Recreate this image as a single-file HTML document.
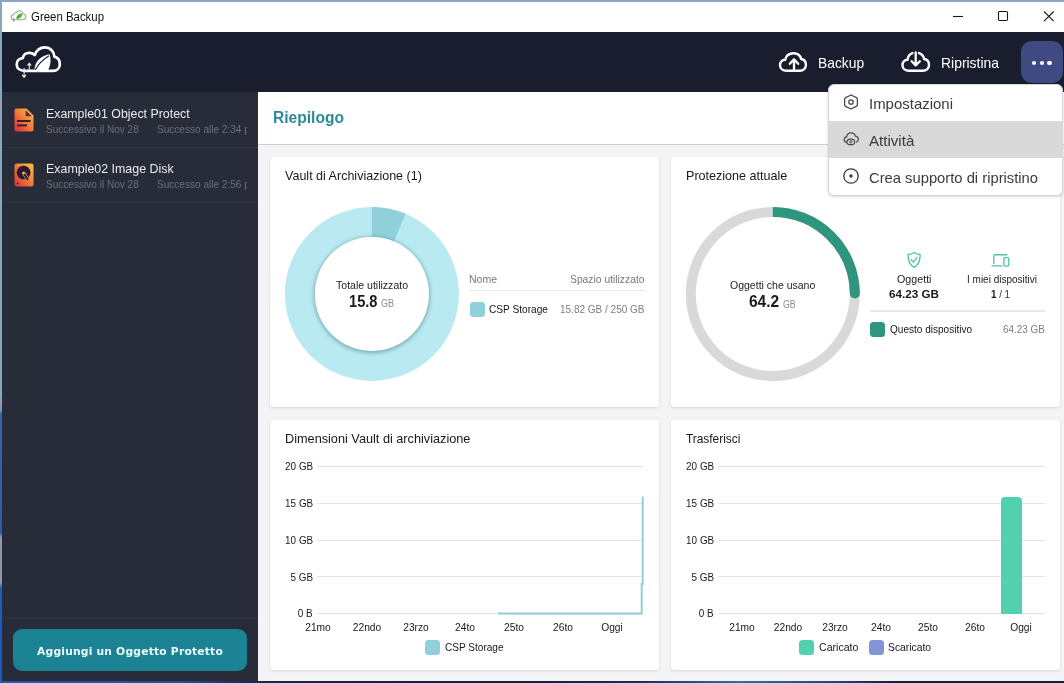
<!DOCTYPE html>
<html lang="it">
<head>
<meta charset="utf-8">
<title>Green Backup</title>
<style>
*{box-sizing:border-box;margin:0;padding:0}
html,body{width:1064px;height:683px;overflow:hidden}
body{position:relative;background:#16356b;font-family:"Liberation Sans",sans-serif;color:#222;-webkit-font-smoothing:antialiased}
.abs{position:absolute}
.t{position:absolute;white-space:nowrap;line-height:1;transform-origin:0 0}
#deskTop{left:0;top:0;width:1064px;height:2px;background:#8aa5bf}
#deskLeft{left:0;top:0;width:2px;height:683px;background:linear-gradient(#8aa5bf 0,#8aa5bf 395px,#7f97b5 410px,#3166ad 414px,#2a5ea5 533px,#8a97ad 537px,#8a97ad 583px,#1f5cc0 588px,#1c58bd 683px)}
#deskBottom{left:0;top:681px;width:1064px;height:2px;background:linear-gradient(90deg,#1c58bd 0,#1c4f9f 180px,#12284f 260px,#101f3d 520px,#12305f 640px,#2a6fb5 740px,#1b4a86 830px,#0f1d3a 900px,#0f1d3a 1064px)}
#titlebar{left:2px;top:2px;width:1062px;height:30px;background:#fff}
#header{left:2px;top:32px;width:1062px;height:60px;background:#1a1d2e}
#sidebar{left:2px;top:92px;width:256px;height:589px;background:#282b38}
#main{left:258px;top:92px;width:806px;height:589px;background:#f4f4f6}
#mainhead{left:258px;top:92px;width:806px;height:53px;background:#fff;border-bottom:1px solid #cfcfd3}
.card{position:absolute;background:#fff;border-radius:3px;box-shadow:0 1px 3px rgba(0,0,0,.13)}
.sideitem{position:absolute;left:2px;width:256px;height:55px;border-bottom:1px solid #2f3341}
.side-title{color:#e9eaee;font-size:13px}
.side-sub{color:#6c6f7c;font-size:11px}
.ct{font-size:13px;color:#18181c}
.ax{font-size:11px;color:#18181c}
.yl3,.yl4{transform-origin:100% 0;transform:scaleX(.9)}
.xl3,.xl4{transform-origin:50% 0;transform:scaleX(.93)}
.gray{color:#8a8a90}
.menu{left:828px;top:84px;width:235px;height:111.5px;background:#fff;border-radius:6px;border:1px solid #d6d6da;box-shadow:0 1px 3px rgba(0,0,0,.16);overflow:hidden}
.mi{font-size:15px;color:#3a3a40}
/*FITX*/
#ttl{transform:scaleX(0.952)}
#hb1{transform:scaleX(0.921)}
#hb2{transform:scaleX(0.928)}
#s1{transform:scaleX(0.951)}
#s1a{transform:scaleX(0.914)}
#s2{transform:scaleX(0.955)}
#riep{transform:scaleX(0.974)}
#c1t{transform:scaleX(0.963)}
#c1a{transform:scaleX(0.916)}
#c1b{transform:scaleX(0.915)}
#c1c{transform:scaleX(0.899)}
#c1n{transform:scaleX(0.999)}
#c1s{transform:scaleX(0.982)}
#c1l{transform:scaleX(0.922)}
#c1v{transform:scaleX(0.952)}
#c2t{transform:scaleX(0.967)}
#c2a{transform:scaleX(0.914)}
#c2b{transform:scaleX(0.967)}
#c2c{transform:scaleX(0.879)}
#c2o{transform:scaleX(1.019)}
#c2ov{transform:scaleX(1.062)}
#c2d{transform:scaleX(0.952)}
#c2dv{transform:scaleX(0.887)}
#c2q{transform:scaleX(0.956)}
#c2qv{transform:scaleX(0.944)}
#c3t{transform:scaleX(0.977)}
#c3l{transform:scaleX(0.915)}
#c4t{transform:scaleX(0.913)}
#c4l1{transform:scaleX(0.962)}
#c4l2{transform:scaleX(0.938)}
#m1{transform:scaleX(0.997)}
#m2{transform:scaleX(1.006)}
#m3{transform:scaleX(0.984)}
#addbtn{transform:scaleX(0.976)}
/*ENDFITX*/
</style>
</head>
<body>
<div class="abs" id="titlebar"></div>
<div class="abs" id="header"></div>
<div class="abs" id="sidebar"></div>
<div class="abs" id="main"></div>
<div class="abs" id="mainhead"></div>

<!-- TITLEBAR -->
<div id="sec-title">
<svg class="abs" style="left:9.5px;top:9.6px" width="17.5" height="12" viewBox="0 0 19 13">
  <path d="M4.6 10.6 C2.4 10.6 1.2 9.4 1.2 7.8 C1.2 6.3 2.3 5.3 3.7 5.2 C3.9 3.6 5.2 2.6 6.7 2.8 C7.4 1.5 8.7 0.8 10.2 0.8 C12.3 0.8 13.9 2.3 14.1 4.3 C15.9 4.4 17.2 5.7 17.2 7.4 C17.2 9.2 15.8 10.6 14 10.6 Z" fill="#fff" stroke="#8db27a" stroke-width="1.15"/>
  <path d="M6.8 9.8 C6.6 6.6 9.2 4 13.2 3.6 C13.6 6.8 11.6 9.6 6.8 9.8 Z" fill="#4cae2f"/>
  <path d="M4 8 L4 12.3 M3 11.2 L4 12.4 L5 11.2" fill="none" stroke="#8a8f8a" stroke-width=".8"/>
</svg>
<div class="t" id="ttl" style="left:31px;top:11px;font-size:12px;color:#111">Green Backup</div>
<svg class="abs" style="left:950px;top:8px" width="110" height="18" viewBox="0 0 110 18">
  <path d="M3 8.5 H13" stroke="#1a1a1a" stroke-width="1.1" fill="none"/>
  <rect x="48.5" y="3.5" width="9" height="9" rx="1.2" fill="none" stroke="#1a1a1a" stroke-width="1.1"/>
  <path d="M94 3.5 L103.7 13.2 M103.7 3.5 L94 13.2" stroke="#1a1a1a" stroke-width="1.1" fill="none"/>
</svg>
</div>
<!-- HEADER -->
<div id="sec-header">
<svg class="abs" id="logo" style="left:14px;top:44px" width="50" height="36" viewBox="0 0 50 36">
  <path d="M11 26.8 C5.6 26.8 2.7 24 2.7 20.4 C2.7 16.8 5.2 14.4 8.8 14.2 C9.2 10.8 12.2 8.6 15.6 8.8 C17.6 8.9 19.4 9.6 20.8 11 C22.4 6.2 26.4 3.3 31 3.3 C36.2 3.3 40 7.2 40.4 12.6 C43.8 13.4 45.8 16.6 45.8 20.2 C45.8 24 43 26.8 39 26.8 Z" fill="none" stroke="#fff" stroke-width="2.7" stroke-linejoin="round"/>
  <path d="M20.6 26 C20.2 18 26.6 11.6 35.6 10.2 C37.2 15 36.8 21.4 34 26 Z" fill="#fff"/>
  <path d="M21.4 25.8 C24.4 20 29.2 15.4 35 11.8" stroke="#1a1d2e" stroke-width="1.15" fill="none"/>
  <path d="M15.3 27 V19.6 M13.5 21.6 L15.3 19.2 L17.1 21.6" stroke="#e9eaf0" stroke-width="1.1" fill="none"/>
  <path d="M10.1 24 V33 M8.2 30.9 L10.1 33.4 L12 30.9" stroke="#e9eaf0" stroke-width="1.1" fill="none"/>
</svg>
<svg class="abs" style="left:777px;top:50px" width="32" height="24" viewBox="0 0 32 24">
  <path d="M22.8 20.75 C26.4 20.75 28.9 18.2 28.9 14.8 C28.9 11.8 27 9.4 24.2 9 C23.4 5.6 20.4 3.2 16.4 3.2 C12.2 3.2 8.6 5.8 8.2 9.8 C5.2 10 3 12.2 3 15.2 C3 18.4 5.8 20.75 9.5 20.75 H22.8" fill="none" stroke="#fff" stroke-width="2.4" stroke-linecap="round" stroke-linejoin="round"/>
  <path d="M17 20.4 V10 M12.8 13.8 L17 9.4 L21.2 13.8" fill="none" stroke="#fff" stroke-width="2.3" stroke-linecap="round" stroke-linejoin="round"/>
</svg>
<div class="t" id="hb1" style="left:818px;top:55px;font-size:15px;color:#fff">Backup</div>
<svg class="abs" style="left:900px;top:50px" width="32" height="24" viewBox="0 0 32 24">
  <path d="M12.4 3.1 C9.8 4 7.9 6.4 7.6 9.8 C4.6 10 2.5 12.2 2.5 15.2 C2.5 18.4 5.2 20.75 9 20.75 H22.8 C26.4 20.75 29 18.2 29 14.8 C29 11.8 27 9.4 24.2 9 C23.6 6.2 21.6 4 19 3.1" fill="none" stroke="#fff" stroke-width="2.4" stroke-linecap="round" stroke-linejoin="round"/>
  <path d="M15.7 2.4 V14.8 M11.6 11.2 L15.7 15.4 L19.8 11.2" fill="none" stroke="#fff" stroke-width="2.3" stroke-linecap="round" stroke-linejoin="round"/>
</svg>
<div class="t" id="hb2" style="left:941px;top:55px;font-size:15px;color:#fff">Ripristina</div>
<div class="abs" style="left:1021px;top:41px;width:41.8px;height:41.6px;border-radius:11px;background:#3f4a82"></div>
<div class="abs" style="left:1031.9px;top:60.9px;width:4.4px;height:4.4px;border-radius:2.2px;background:#fff"></div>
<div class="abs" style="left:1039.6px;top:60.9px;width:4.4px;height:4.4px;border-radius:2.2px;background:#fff"></div>
<div class="abs" style="left:1047.2px;top:60.9px;width:4.4px;height:4.4px;border-radius:2.2px;background:#fff"></div>
</div>
<!-- SIDEBAR -->
<div id="sec-side">
<svg width="0" height="0" style="position:absolute"><defs>
  <linearGradient id="og" x1="1" y1="0" x2="0" y2="1"><stop offset="0" stop-color="#f9c648"/><stop offset=".5" stop-color="#f07a3a"/><stop offset="1" stop-color="#da2c3a"/></linearGradient>
</defs></svg>
<div class="sideitem" style="top:92px;height:56px"></div>
<div class="sideitem" style="top:148px"></div>
<svg class="abs" style="left:14px;top:108px" width="20" height="24" viewBox="0 0 20 24">
  <path d="M2.5 0.5 H12.5 L19.5 7.5 V21.5 Q19.5 23.5 17.5 23.5 H2.5 Q0.5 23.5 0.5 21.5 V2.5 Q0.5 0.5 2.5 0.5 Z" fill="url(#og)"/>
  <path d="M11.6 2.2 L17.8 8.2 H12.6 Q11.6 8.2 11.6 7.2 Z" fill="#3a2030" opacity=".85"/>
  <rect x="3" y="12" width="13.6" height="2" fill="#3a2030"/>
  <rect x="3" y="16.4" width="10" height="2" fill="#3a2030"/>
</svg>
<div class="t side-title" id="s1" style="left:46px;top:107px">Example01 Object Protect</div>
<div class="t side-sub" id="s1a" style="left:46px;top:124px">Successivo il Nov 28</div>
<div class="abs" style="left:157px;top:120px;width:90px;height:18px;overflow:hidden"><div class="t side-sub" id="s1b" style="left:0;top:4px;transform:scaleX(.914)">Successo alle 2:34 pm</div></div>
<svg class="abs" style="left:14px;top:163px" width="20" height="24" viewBox="0 0 20 24">
  <rect x="0.5" y="0.5" width="19" height="23" rx="2.2" fill="url(#og)"/>
  <circle cx="9.6" cy="9.6" r="6.9" fill="#2a1a2c"/>
  <path d="M9.8 10.2 L13.6 16.4" stroke="#f5b24a" stroke-width="3.4" stroke-linecap="round"/>
  <path d="M9.8 10.2 L13.6 16.4" stroke="#2a1a2c" stroke-width="2.1" stroke-linecap="round"/>
  <circle cx="9.7" cy="10.2" r="1.1" fill="#f8c27a"/>
  <circle cx="3.8" cy="20.2" r="1" fill="#5a1a2a"/>
</svg>
<div class="t side-title" id="s2" style="left:46px;top:162px">Example02 Image Disk</div>
<div class="t side-sub" id="s2a" style="left:46px;top:179px;transform:scaleX(.914)">Successivo il Nov 28</div>
<div class="abs" style="left:157px;top:175px;width:90px;height:18px;overflow:hidden"><div class="t side-sub" id="s2b" style="left:0;top:4px;transform:scaleX(.914)">Successo alle 2:56 pm</div></div>
<div class="abs" style="left:2px;top:618px;width:256px;height:1px;background:#30343f"></div>
<div class="abs" style="left:13px;top:629px;width:234px;height:42px;border-radius:9px;background:#1c8394"></div>
<div class="t" id="addbtn" style="left:36.8px;top:646.3px;font-family:'DejaVu Sans',sans-serif;font-weight:bold;font-size:11px;letter-spacing:.2px;color:#eef9fb">Aggiungi un Oggetto Protetto</div>
</div>
<!-- CARDS -->
<div id="sec-cards">
<div class="t" id="riep" style="left:273px;top:110.4px;font-size:16px;font-weight:bold;color:#2b8a9a">Riepilogo</div>
<div class="card" style="left:270px;top:157px;width:389px;height:250px"></div>
<div class="t ct" id="c1t" style="left:285px;top:169px">Vault di Archiviazione (1)</div>
<svg class="abs" style="left:272px;top:194px" width="200" height="200" viewBox="272 194 200 200">
  <defs><filter id="ish" x="-20%" y="-20%" width="140%" height="140%"><feGaussianBlur stdDeviation="2.2"/></filter></defs>
  <circle cx="371.9" cy="293.9" r="72" fill="none" stroke="#b9eaf2" stroke-width="30"/>
  <path d="M371.90 221.90 A72 72 0 0 1 399.80 227.53" fill="none" stroke="#8fd0db" stroke-width="30"/>
  <circle cx="371.9" cy="294.9" r="58" fill="#4f8690" opacity=".62" filter="url(#ish)"/>
  <circle cx="371.9" cy="293.9" r="57" fill="#fff"/>
</svg>
<div class="t" id="c1a" style="left:336px;top:279.6px;font-size:11.5px;color:#222">Totale utilizzato</div>
<div class="t" id="c1b" style="left:348.8px;top:294px;font-size:16px;font-weight:bold;color:#1a1a1a">15.8</div>
<div class="t gray" id="c1c" style="left:381px;top:299.2px;font-size:10px">GB</div>
<div class="t gray" id="c1n" style="left:469px;top:274px;font-size:10.5px;color:#77777d">Nome</div>
<div class="t gray" id="c1s" style="left:570px;top:274px;font-size:10.5px;color:#77777d">Spazio utilizzato</div>
<div class="abs" style="left:469px;top:289.6px;width:175.6px;height:1.8px;background:#e8e8eb"></div>
<div class="abs" style="left:469.5px;top:302px;width:15px;height:15px;border-radius:3.5px;background:#8fd0db"></div>
<div class="t" id="c1l" style="left:489px;top:304px;font-size:11px;color:#161618">CSP Storage</div>
<div class="t gray" id="c1v" style="left:560px;top:304px;font-size:10.5px;color:#7d7d83">15.82 GB / 250 GB</div>
<div class="card" style="left:671px;top:157px;width:389px;height:250px"></div>
<div class="t ct" id="c2t" style="left:686px;top:169px">Protezione attuale</div>
<svg class="abs" style="left:673px;top:194px" width="200" height="200" viewBox="673 194 200 200">
  <circle cx="772.8" cy="294" r="82" fill="none" stroke="#d9d9d9" stroke-width="10"/>
  <path d="M772.80 212.00 A82 82 0 0 1 854.80 293.43" fill="none" stroke="#2e957f" stroke-width="10"/>
  <circle cx="854.80" cy="293.43" r="5" fill="#2e957f"/>
</svg>
<div class="t" id="c2a" style="left:730px;top:279.6px;font-size:11.5px;color:#222">Oggetti che usano</div>
<div class="t" id="c2b" style="left:749.3px;top:294.4px;font-size:16px;font-weight:bold;color:#1a1a1a">64.2</div>
<div class="t gray" id="c2c" style="left:783.3px;top:299.5px;font-size:10px">GB</div>
<svg class="abs" style="left:905.9px;top:251px" width="16.2" height="18" viewBox="0 0 18 20">
  <path d="M9 1.6 C11 3 13.4 3.8 15.6 3.9 C15.9 10 14 15.4 9 18.2 C4 15.4 2.1 10 2.4 3.9 C4.6 3.8 7 3 9 1.6 Z" fill="none" stroke="#4fc4a8" stroke-width="1.5" stroke-linejoin="round"/>
  <path d="M5.8 9.8 L8.2 12.2 L12.4 7.4" fill="none" stroke="#4fc4a8" stroke-width="1.5" stroke-linecap="round" stroke-linejoin="round"/>
</svg>
<div class="t" id="c2o" style="left:897px;top:274px;font-size:10.5px;color:#222">Oggetti</div>
<div class="t" id="c2ov" style="left:889px;top:289px;font-size:11px;font-weight:bold;color:#1a1a1a">64.23 GB</div>
<svg class="abs" style="left:991.2px;top:253.4px" width="19.2" height="14.8" viewBox="0 0 22 17">
  <path d="M3.2 12.4 V3.6 Q3.2 2 4.8 2 H18" fill="none" stroke="#4fc4a8" stroke-width="1.5" stroke-linecap="round"/>
  <path d="M1.2 14.8 H12.4" fill="none" stroke="#4fc4a8" stroke-width="1.7" stroke-linecap="round"/>
  <rect x="14.8" y="5.4" width="5.6" height="9.6" rx="1.1" fill="none" stroke="#4fc4a8" stroke-width="1.5"/>
</svg>
<div class="t" id="c2d" style="left:966.5px;top:274px;font-size:10.5px;color:#222">I miei dispositivi</div>
<div class="t" id="c2dv" style="left:991px;top:289px;font-size:11px;color:#333"><b style="color:#1a1a1a">1</b> / 1</div>
<div class="abs" style="left:870px;top:310.4px;width:174.8px;height:1.8px;background:#e8e8eb"></div>
<div class="abs" style="left:870px;top:322px;width:15px;height:15px;border-radius:3.5px;background:#2e957f"></div>
<div class="t" id="c2q" style="left:890px;top:324px;font-size:10.5px;color:#161618">Questo dispositivo</div>
<div class="t gray" id="c2qv" style="left:1003px;top:324px;font-size:10.5px;color:#7d7d83">64.23 GB</div>
<div class="card" style="left:270px;top:420px;width:389px;height:250px"></div>
<div class="t ct" id="c3t" style="left:285px;top:432px">Dimensioni Vault di archiviazione</div>
<div class="abs" style="left:317px;top:466.40px;width:326px;height:1px;background:#e3e3e7"></div>
<div class="t ax yl3" style="right:751px;top:461.40px">20 GB</div>
<div class="abs" style="left:317px;top:503.00px;width:326px;height:1px;background:#e3e3e7"></div>
<div class="t ax yl3" style="right:751px;top:498.00px">15 GB</div>
<div class="abs" style="left:317px;top:539.60px;width:326px;height:1px;background:#e3e3e7"></div>
<div class="t ax yl3" style="right:751px;top:534.70px">10 GB</div>
<div class="abs" style="left:317px;top:576.40px;width:326px;height:1px;background:#e3e3e7"></div>
<div class="t ax yl3" style="right:751px;top:571.50px">5 GB</div>
<div class="abs" style="left:317px;top:612.95px;width:326px;height:1px;background:#e3e3e7"></div>
<div class="t ax yl3" style="right:751px;top:608.10px">0 B</div>
<div class="t ax xl3" style="left:288px;width:60px;text-align:center;top:622px">21mo</div>
<div class="t ax xl3" style="left:337px;width:60px;text-align:center;top:622px">22ndo</div>
<div class="t ax xl3" style="left:386px;width:60px;text-align:center;top:622px">23rzo</div>
<div class="t ax xl3" style="left:435px;width:60px;text-align:center;top:622px">24to</div>
<div class="t ax xl3" style="left:484px;width:60px;text-align:center;top:622px">25to</div>
<div class="t ax xl3" style="left:533px;width:60px;text-align:center;top:622px">26to</div>
<div class="t ax xl3" style="left:582px;width:60px;text-align:center;top:622px">Oggi</div>
<svg class="abs" style="left:490px;top:490px" width="160" height="130" viewBox="490 490 160 130">
  <path d="M498 613.5 H641.7 V584 H642.7 V496.6" fill="none" stroke="#8fccd8" stroke-width="1.9" stroke-linejoin="miter"/>
</svg>
<div class="abs" style="left:425px;top:640px;width:15px;height:15px;border-radius:3.5px;background:#8fd0db"></div>
<div class="t ax" id="c3l" style="left:445px;top:642px">CSP Storage</div>
<div class="card" style="left:671px;top:420px;width:389px;height:250px"></div>
<div class="t ct" id="c4t" style="left:686px;top:432px">Trasferisci</div>
<div class="abs" style="left:719px;top:466.40px;width:326px;height:1px;background:#e3e3e7"></div>
<div class="t ax yl4" style="right:350px;top:461.40px">20 GB</div>
<div class="abs" style="left:719px;top:503.00px;width:326px;height:1px;background:#e3e3e7"></div>
<div class="t ax yl4" style="right:350px;top:498.00px">15 GB</div>
<div class="abs" style="left:719px;top:539.60px;width:326px;height:1px;background:#e3e3e7"></div>
<div class="t ax yl4" style="right:350px;top:534.70px">10 GB</div>
<div class="abs" style="left:719px;top:576.40px;width:326px;height:1px;background:#e3e3e7"></div>
<div class="t ax yl4" style="right:350px;top:571.50px">5 GB</div>
<div class="abs" style="left:719px;top:612.95px;width:326px;height:1px;background:#e3e3e7"></div>
<div class="t ax yl4" style="right:350px;top:608.10px">0 B</div>
<div class="t ax xl4" style="left:711.68px;width:60px;text-align:center;top:622px">21mo</div>
<div class="t ax xl4" style="left:758.25px;width:60px;text-align:center;top:622px">22ndo</div>
<div class="t ax xl4" style="left:804.82px;width:60px;text-align:center;top:622px">23rzo</div>
<div class="t ax xl4" style="left:851.39px;width:60px;text-align:center;top:622px">24to</div>
<div class="t ax xl4" style="left:897.97px;width:60px;text-align:center;top:622px">25to</div>
<div class="t ax xl4" style="left:944.53px;width:60px;text-align:center;top:622px">26to</div>
<div class="t ax xl4" style="left:991.10px;width:60px;text-align:center;top:622px">Oggi</div>
<div class="abs" style="left:1001px;top:497px;width:21px;height:116.5px;border-radius:4px 4px 0 0;background:#52d1b1"></div>
<div class="abs" style="left:799px;top:640px;width:15px;height:15px;border-radius:3.5px;background:#52d1b1"></div>
<div class="t ax" id="c4l1" style="left:819px;top:642px">Caricato</div>
<div class="abs" style="left:869px;top:640px;width:15px;height:15px;border-radius:3.5px;background:#8395d4"></div>
<div class="t ax" id="c4l2" style="left:888px;top:642px">Scaricato</div>
</div>
<!-- MENU -->
<div id="sec-menu">
<div class="abs menu">
  <div class="abs" style="left:-1px;top:36px;width:236px;height:36.5px;background:#d9d9d9"></div>
</div>
<svg class="abs" style="left:842px;top:93px" width="18" height="18" viewBox="0 0 18 18">
  <path d="M9 2 L14.4 4.6 Q15.4 5.1 15.4 6.2 V11.8 Q15.4 12.9 14.4 13.4 L9 16 L3.6 13.4 Q2.6 12.9 2.6 11.8 V6.2 Q2.6 5.1 3.6 4.6 Z" fill="none" stroke="#4a4a50" stroke-width="1.3" stroke-linejoin="round"/>
  <circle cx="9" cy="9" r="2.2" fill="none" stroke="#4a4a50" stroke-width="1.3"/>
</svg>
<div class="t mi" id="m1" style="left:869px;top:96px">Impostazioni</div>
<svg class="abs" style="left:842px;top:130px" width="18" height="18" viewBox="0 0 18 18">
  <path d="M5.2 12.6 C3.4 12.4 2.2 11.2 2.2 9.6 C2.2 8.1 3.3 7 4.7 6.8 C4.9 4.4 6.8 2.8 9.1 2.8 C11.2 2.8 12.9 4.1 13.4 6.1 C15.2 6.3 16.4 7.6 16.4 9.3 C16.4 10.6 15.7 11.6 14.6 12.1" fill="none" stroke="#4a4a50" stroke-width="1.2" stroke-linecap="round"/>
  <ellipse cx="8.8" cy="11.9" rx="3.9" ry="2.8" fill="#d9d9d9" stroke="#4a4a50" stroke-width="1.2"/>
  <circle cx="8.8" cy="11.9" r="1.1" fill="none" stroke="#4a4a50" stroke-width="1"/>
</svg>
<div class="t mi" id="m2" style="left:869px;top:133px">Attività</div>
<svg class="abs" style="left:842px;top:167px" width="18" height="18" viewBox="0 0 18 18">
  <circle cx="9" cy="9" r="7.2" fill="none" stroke="#3a3a40" stroke-width="1.3"/>
  <circle cx="9" cy="9" r="1.7" fill="#3a3a40"/>
</svg>
<div class="t mi" id="m3" style="left:869px;top:170px">Crea supporto di ripristino</div>
</div>

<div class="abs" id="deskTop"></div>
<div class="abs" id="deskLeft"></div>
<div class="abs" id="deskBottom"></div>
</body>
</html>
